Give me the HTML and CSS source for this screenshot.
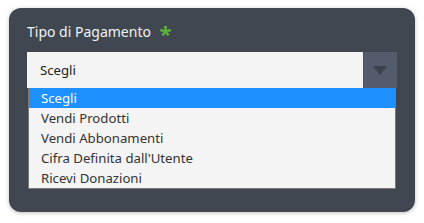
FILE: index.html
```html
<!DOCTYPE html>
<html>
<head>
<meta charset="utf-8">
<link rel="stylesheet" href="styles.css">
</head>
<body>
<div class="card">
  <div class="label">Tipo di Pagamento <span class="req">*</span></div>
  <div class="select-wrap">
    <div class="select">
      <span class="value">Scegli</span>
      <span class="arrow"><svg width="14" height="10" viewBox="0 0 14 10"><polygon points="0,0 14,0 7,9" fill="#3a414c"/></svg></span>
    </div>
    <ul class="list">
      <li class="active">Scegli</li>
      <li>Vendi Prodotti</li>
      <li>Vendi Abbonamenti</li>
      <li>Cifra Definita dall'Utente</li>
      <li>Ricevi Donazioni</li>
    </ul>
  </div>
</div>
</body>
</html>
```
FILE: styles.css
```css
html, body {
  margin: 0;
  padding: 0;
  background: #ffffff;
}
body {
  padding: 8px 9px 11px 9px;
  font-family: "Noto Sans", "Open Sans", sans-serif;
}
.card {
  width: 406px;
  height: 204px;
  box-sizing: border-box;
  background: #404751;
  border-radius: 12px;
  box-shadow: 0 1px 4px rgba(0,0,0,0.25);
  padding: 14px 18px 0 18px;
}
.label {
  color: #f2f2f2;
  font-size: 14px;
  line-height: 20px;
  height: 30px;
}
.req {
  color: #5cb23a;
  font-size: 22px;
  font-weight: bold;
  margin-left: 5px;
  vertical-align: -5px;
}
.select {
  display: flex;
  height: 36px;
  width: 370px;
  background: #f4f4f4;
}
.value {
  flex: 1;
  color: #222;
  font-size: 13.2px;
  line-height: 36px;
  padding-left: 13px;
}
.arrow {
  width: 34px;
  background: #535c6c;
  display: flex;
  align-items: center;
  justify-content: center;
  box-shadow: inset 1px 0 0 #4a5260;
}
.arrow svg { margin-top: 2px; }
.list {
  list-style: none;
  margin: 0 0 0 1px;
  padding: 0;
  width: 368px;
  box-sizing: border-box;
  border: 1px solid #7a7a7a;
  border-top: none;
  background: #f4f4f4;
}
.list li {
  height: 20px;
  line-height: 20px;
  padding-left: 12px;
  font-size: 13.2px;
  color: #333;
}
.list li.active {
  background: #1e90ff;
  color: #fff;
}
```
